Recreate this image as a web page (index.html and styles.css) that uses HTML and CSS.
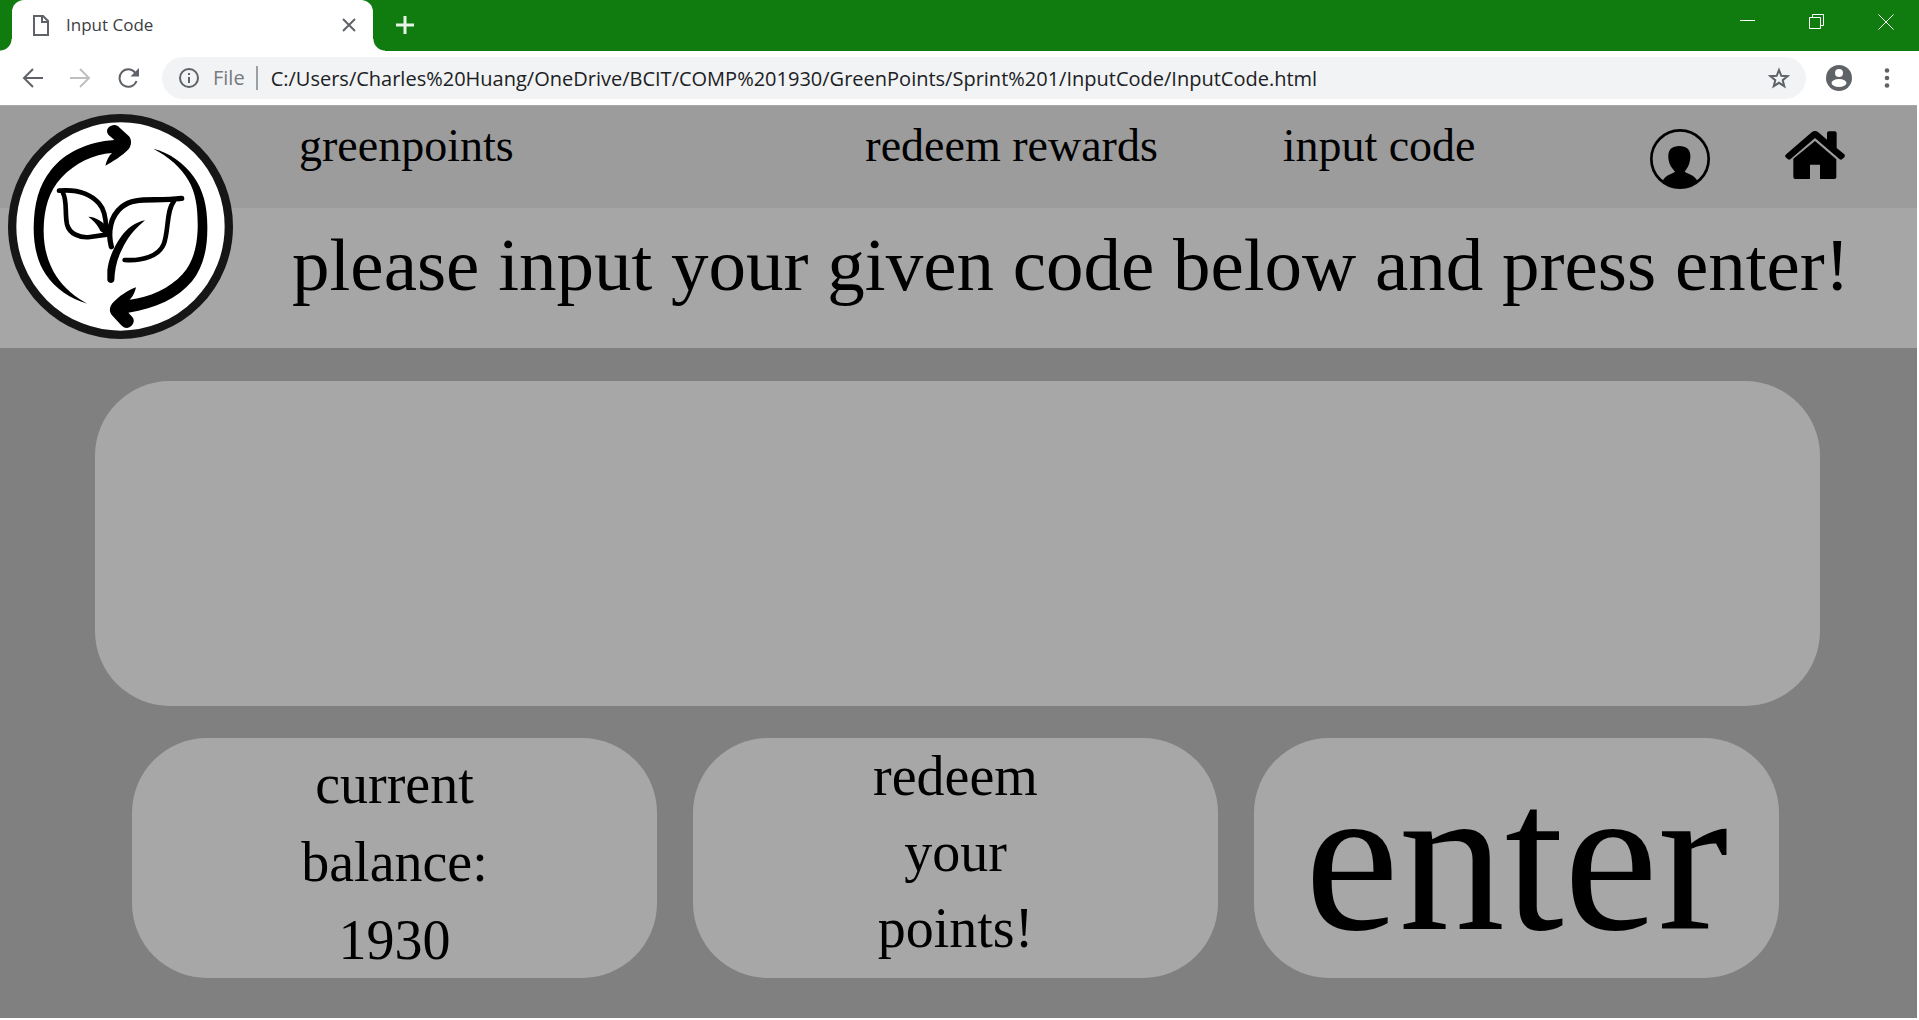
FILE: index.html
```html
<!DOCTYPE html>
<html lang="en">
<head>
<meta charset="utf-8">
<title>Input Code</title>
<link rel="stylesheet" href="styles.css">
</head>
<body>
<header class="browser">
  <div class="tabs">
    <div class="tab-edge tab-edge-left"></div>
    <div class="tab">
      <svg class="tab-icon" width="18" height="24" viewBox="0 0 18 24" fill="none" stroke="#5f6368" stroke-width="2"><path d="M2 3h9l5 5v14H2zM10 3v6h6"/></svg>
      <span class="tab-title">Input Code</span>
      <button class="icon-button" aria-label="Close tab"><svg width="14" height="14" viewBox="0 0 14 14" stroke="#5f6368" stroke-width="2"><path d="M1 1l12 12M13 1L1 13"/></svg></button>
    </div>
    <div class="tab-edge tab-edge-right"></div>
    <button class="icon-button new-tab" aria-label="New tab"><svg width="18" height="18" viewBox="0 0 18 18" stroke="#e8f3e8" stroke-width="3"><path d="M9 0v18M0 9h18"/></svg></button>
    <div class="window-controls">
      <button class="icon-button" aria-label="Minimize"><svg width="16" height="16" viewBox="0 0 16 16" stroke="#fff"><path d="M0 6.500h15"/></svg></button>
      <button class="icon-button" aria-label="Restore"><svg width="16" height="16" viewBox="0 0 16 16" fill="none" stroke="#fff"><path d="M.5 3.500h11v11H.5zM3.500 3.500v-3h11v11h-3"/></svg></button>
      <button class="icon-button" aria-label="Close"><svg width="16" height="16" viewBox="0 0 16 16" stroke="#fff"><path d="M.5.5l15 15M15.500.5l-15 15"/></svg></button>
    </div>
  </div>
  <div class="toolbar">
    <button class="icon-button" aria-label="Back"><svg width="22" height="20" viewBox="0 0 22 20" fill="none" stroke="#5f6368" stroke-width="2"><path d="M21 10H2M11 1l-9 9 9 9"/></svg></button>
    <button class="icon-button" aria-label="Forward"><svg width="22" height="20" viewBox="0 0 22 20" fill="none" stroke="#bdbfc1" stroke-width="2"><path d="M0 10h19M10 1l9 9-9 9"/></svg></button>
    <button class="icon-button" aria-label="Reload"><svg width="22" height="20" viewBox="0 0 22 20"><path d="M17 4.500A8.700 8.700 0 1 0 18.500 13" fill="none" stroke="#5f6368" stroke-width="2"/><path d="M21 0v8.500h-8.500z" fill="#5f6368"/></svg></button>
    <div class="address">
      <svg width="22" height="22" viewBox="0 0 22 22" fill="none" stroke="#5f6368" stroke-width="2"><circle cx="11" cy="11" r="9"/><path d="M11 10v6M11 6v2"/></svg>
      <label class="scheme" for="url">File</label>
      <input class="url" id="url" value="C:/Users/Charles%20Huang/OneDrive/BCIT/COMP%201930/GreenPoints/Sprint%201/InputCode/InputCode.html">
      <button class="icon-button" aria-label="Bookmark"><svg width="22" height="22" viewBox="0 0 22 22" fill="none" stroke="#5f6368" stroke-width="2"><path d="M11 3l2.300 5.800 6.200.4-4.800 4 1.600 6L11 15.800l-5.300 3.400 1.600-6-4.800-4 6.200-.4z"/></svg></button>
    </div>
    <button class="icon-button profile" aria-label="Profile"><svg width="26" height="26" viewBox="0 0 26 26"><circle cx="13" cy="13" r="13" fill="#5f6368"/><circle cx="13" cy="8" r="4" fill="#fff"/><ellipse cx="13" cy="18" rx="7.500" ry="4" fill="#fff"/></svg></button>
    <button class="icon-button" aria-label="Menu"><svg width="6" height="20" viewBox="0 0 6 20" fill="#5f6368"><circle cx="3" cy="2.500" r="2.300"/><circle cx="3" cy="10" r="2.300"/><circle cx="3" cy="17.500" r="2.300"/></svg></button>
  </div>
</header>
<div class="page">
  <div class="masthead">
    <a class="logo" href="#" aria-label="GreenPoints">
      <svg width="225" height="225" viewBox="24 42 675 675" fill="none" stroke="#000" stroke-linecap="round" stroke-linejoin="round">
        <circle cx="361.500" cy="379.500" r="325" fill="#fff" stroke="#161616" stroke-width="25"/>
        <g fill="#000" stroke="none">
          <path d="M262 611C210 596 166 566 137 523C112 485 101 438 101 385C102 310 116 257 153 210C193 159 262 125 343 120L325 104C315 92 325 76 343 75C350 75 354 78 359 83L387 109C396 119 395 138 384 149C366 167 340 184 316 197C320 180 327 167 336 159C282 162 224 190 184 233C146 274 132 327 131 387C130 440 143 490 170 530C194 565 224 590 262 611Z"/>
          <path d="M460 146C509 158 552 189 581 230C610 270 623 320 622 387C622 449 609 502 576 544C533 595 468 625 385 638L397 651C408 664 396 682 380 684C374 684 369 681 363 675L336 646C326 634 328 620 340 607C358 588 382 572 408 562C404 580 398 590 389 599C447 593 509 565 548 522C581 485 591 438 593 387C594 330 589 282 565 241C544 203 506 170 460 146Z"/>
          <path d="M265 350C288 351 312 366 326 389L320 406L301 393C293 374 280 362 265 350Z"/>
          <path d="M435 361C407 366 380 386 363 410C342 440 326 475 322 511L322 541C326 552 340 552 343 541C344 510 350 479 365 450C382 413 405 386 435 361Z"/>
        </g>
        <path d="M177 272C229 267 269 279 297 310C313 328 318 350 318 385" stroke-width="14"/>
        <path d="M189 279C202 303 194 340 201 373C208 401 239 415 270 411L320 404" stroke-width="14"/>
        <path d="M334 440C323 397 330 350 365 321C403 288 461 306 545 295" stroke-width="16"/>
        <path d="M374 480C430 484 476 467 491 433C506 397 499 330 521 305" stroke-width="14"/>
      </svg>
    </a>
    <nav class="nav">
      <a class="nav-brand" href="#">greenpoints</a>
      <a class="nav-redeem" href="#">redeem rewards</a>
      <a class="nav-code" href="#">input code</a>
      <a class="nav-user" href="#" aria-label="Account"><svg width="60" height="60" viewBox="0 0 180 180"><circle cx="90" cy="90" r="86" fill="none" stroke="#000" stroke-width="8"/><path d="M38 155C48 136 67 135 75 128C66 118 58 108 56 94C51 65 63 51 88 51C113 51 125 65 120 94C118 108 112 118 104 128C117 136 132 137 142 155C110 184 68 184 38 155Z"/></svg></a>
      <a class="nav-home" href="#" aria-label="Home"><svg width="60" height="49" viewBox="0 0 180 147"><path d="M2 71L80 4Q90-4 100 4L126 26V7Q126 1 132 1H149Q155 1 155 7V51L178 70Q181 74 178 79L171 85Q167 88 163 84L90 21L17 84Q13 88 9 85L2 79Q-1 75 2 71ZM25 83L90 30L154 85V139Q154 144 148 144H105V101H75V144H31Q25 144 25 138Z"/></svg></a>
    </nav>
    <h1 class="prompt">please input your given code below and press enter!</h1>
  </div>
  <main class="content">
    <input class="code-input" aria-label="Code">
    <div class="cards">
      <section class="card balance">current<br>balance:<br>1930</section>
      <a class="card redeem" href="#">redeem<br>your<br>points!</a>
      <button class="card enter">enter</button>
    </div>
  </main>
</div>
</body>
</html>
```
FILE: styles.css
```css
* { box-sizing: border-box; }
body { margin: 0; background: #fff; font-family: "Open Sans", sans-serif; }
svg { display: block; flex: none; }
a { color: #000; text-decoration: none; }
.icon-button { padding: 0; border: 0; background: none; }

.tabs { display: flex; align-items: stretch; height: 51px; background: #107c10; }
.tab-edge { align-self: flex-end; width: 12px; height: 12px; }
.tab-edge-left { background: radial-gradient(circle at 0 0, #107c10 11px, #fff 12px); }
.tab-edge-right { background: radial-gradient(circle at 100% 0, #107c10 11px, #fff 12px); }
.tab {
  display: flex; align-items: center; gap: 16px;
  width: 361px; padding: 0 17px 2px 20px;
  background: #fff; border-radius: 12px 12px 0 0;
}
.tab-title { flex: 1; font-size: 17px; color: #3c4043; }
.new-tab { margin-left: 11px; padding-bottom: 2px; }
.window-controls { display: flex; gap: 53px; align-items: flex-start; margin-left: auto; padding: 14px 25px 0 0; }

.toolbar { display: flex; align-items: center; gap: 26px; height: 54px; padding: 0 29px 0 22px; }
.address {
  display: flex; flex: 1; align-items: center; height: 42px;
  margin-left: -4px; padding: 0 16px; border-radius: 21px; background: #f1f3f4;
}
.scheme { margin-left: 13px; padding-right: 11px; border-right: 2px solid #9aa0a6; font-size: 20px; line-height: 24px; color: #777a7e; }
.url { flex: 1; margin-left: 13px; padding: 0; border: 0; background: none; font: 20px "Open Sans", sans-serif; color: #202124; }
.profile { margin: 0 6px 0 -6px; }

.page { margin-right: 2px; background: #808080; font-family: "Liberation Serif", serif; }
.masthead { display: grid; grid-template-columns: 232px 1fr; grid-template-rows: 103px 140px; background: #a6a6a6; }
.nav, .logo { grid-row: 1; }
.logo { grid-column: 1; grid-row: 1 / 3; z-index: 1; padding: 9px 0 0 8px; }
.nav {
  display: grid; grid-column: 1 / 3; align-items: start;
  grid-template-columns: 566fr 417fr 367fr 135fr 60fr;
  padding: 14px 72px 0 299px; background: #9c9c9c; border-top: 1px solid #aaa;
  font-size: 46px; line-height: 52px;
}
.nav-user { padding-top: 9px; }
.nav-home { padding-top: 11px; }
.prompt { grid-column: 2; grid-row: 2; margin: 0; padding: 11px 0 0 60px; font-size: 75px; font-weight: 400; line-height: 92px; white-space: nowrap; }
.content { padding: 33px 97px 40px 95px; }
.code-input {
  display: block; width: 100%; height: 325px; padding: 0 75px; border: 0;
  border-radius: 75px; background: #a7a7a7; font: 144px "Liberation Serif", serif;
}
.cards { display: grid; grid-template-columns: repeat(3, 1fr); gap: 36px; padding: 32px 41px 0 37px; }
.card {
  height: 240px; padding: 0; border: 0; border-radius: 75px;
  background: #a7a7a7; color: #000; text-align: center;
  font: 56px/78px "Liberation Serif", serif;
}
.balance { padding-top: 7px; }
.redeem { line-height: 76px; }
.enter { font-size: 212px; line-height: 200px; }
```
